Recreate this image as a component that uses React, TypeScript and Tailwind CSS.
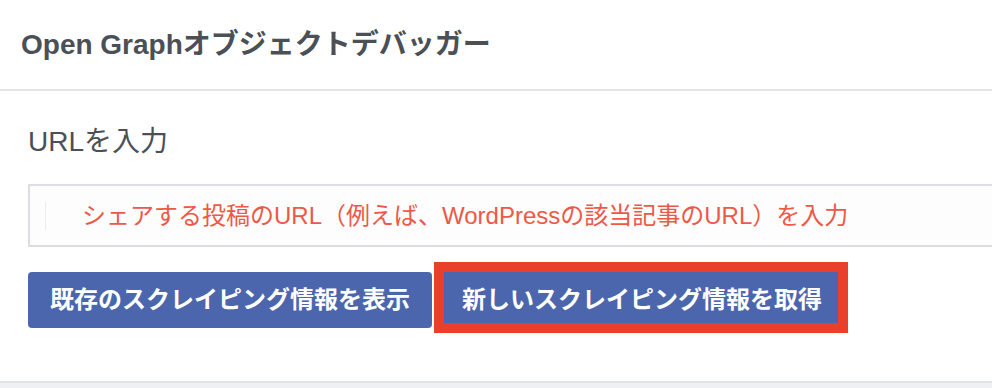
import React from "react";

const font = { fontFamily: '"Liberation Sans", "Noto Sans CJK JP", sans-serif' };

function ActionButton({ label }: { label: string }) {
  return (
    <button
      type="button"
      className="h-[56px] shrink-0 rounded-[4px] bg-[#4b66ad] px-[22px] text-[24px] font-bold leading-[30px] text-white"
    >
      {label}
    </button>
  );
}

export default function App() {
  return (
    <div className="h-[388px] w-full overflow-hidden bg-[#eff0f3]" style={font}>
      <div className="h-[383px] border-b-2 border-[#e1e2e6] bg-white">
        <div className="flex h-[91px] items-center border-b-2 border-[#e5e5e5] px-[21px]">
          <h1 className="text-[28px] font-bold leading-[34px] text-[#4b4f56]">
            Open Graphオブジェクトデバッガー
          </h1>
        </div>

        <div className="pl-[28px] pt-[34px]">
          <label className="block text-[28px] leading-[34px] text-[#4b4f56]">URLを入力</label>

          <div className="mt-[25px] flex h-[63px] w-[1000px] shrink-0 items-center border-2 border-[#dcdee3] bg-[#fdfdfd]">
            <span className="ml-[15px] h-[28px] w-px bg-[#ececec]" />
            <input
              type="text"
              placeholder="シェアする投稿のURL（例えば、WordPressの該当記事のURL）を入力"
              className="h-full flex-1 bg-transparent pl-[36px] text-[24px] text-[#4b4f56] outline-none placeholder:text-[#ee5847]"
            />
          </div>

          <div className="mt-[25px] flex gap-[8px]">
            <ActionButton label="既存のスクレイピング情報を表示" />
            <div className="relative">
              <ActionButton label="新しいスクレイピング情報を取得" />
              <div className="pointer-events-none absolute -left-[6px] -top-[10px] h-[71px] w-[414px] border-[10px] border-[#e8402a]" />
            </div>
          </div>
        </div>
      </div>
    </div>
  );
}
